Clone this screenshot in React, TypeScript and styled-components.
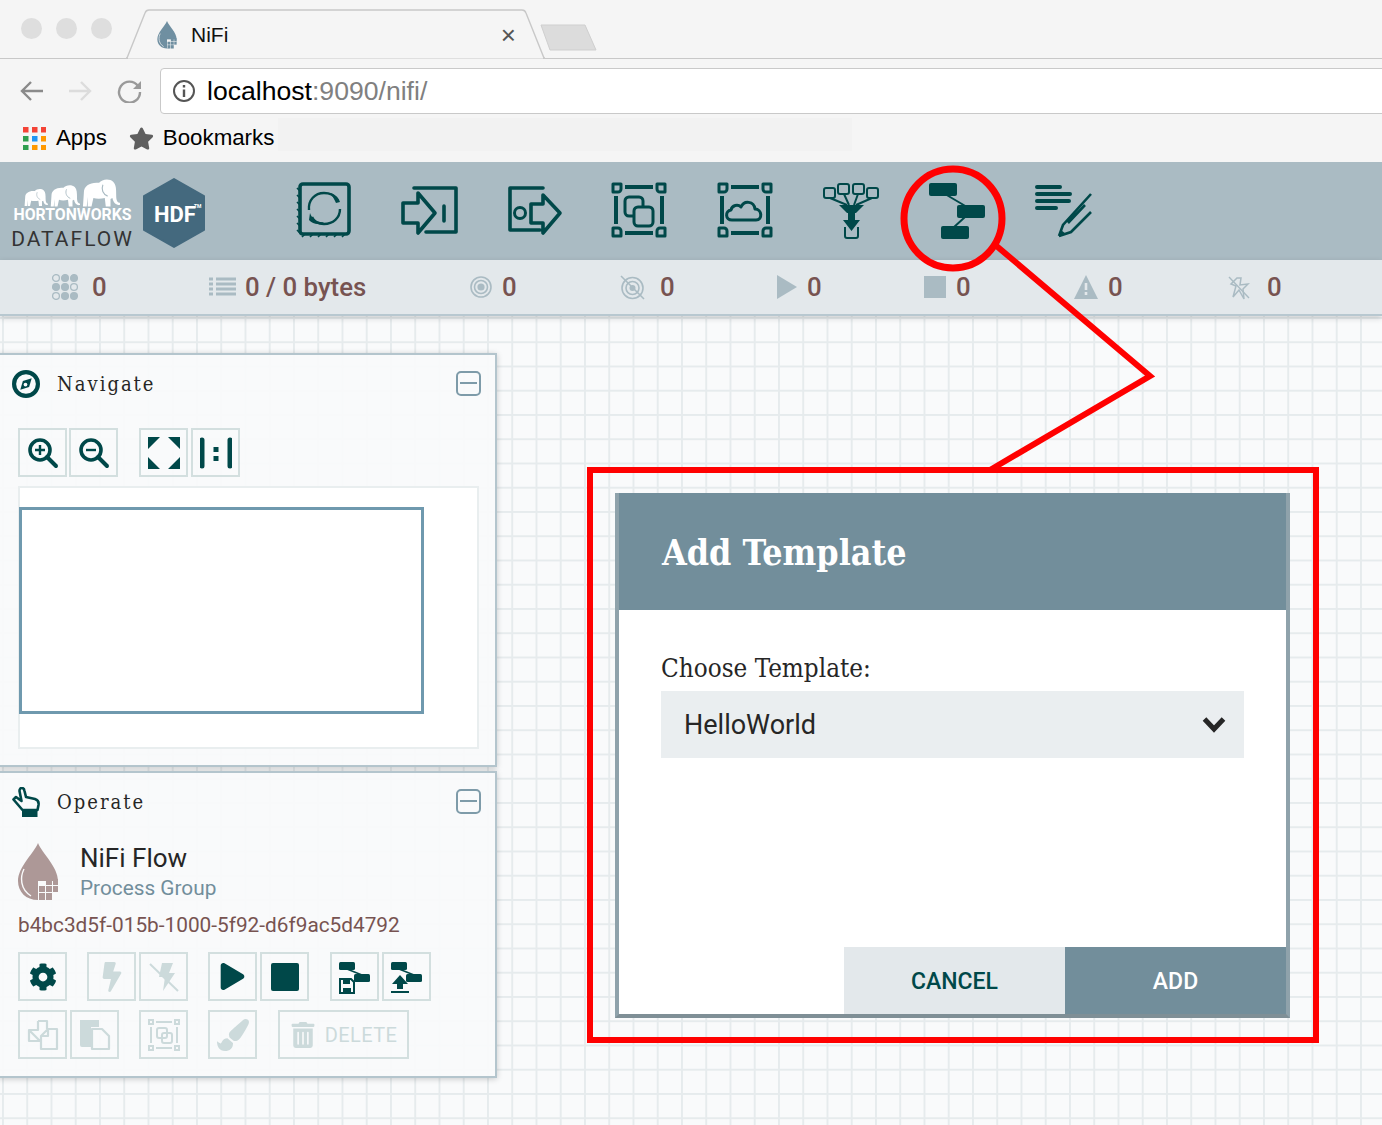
import React from 'react';
import styled, { createGlobalStyle } from 'styled-components';
import { FaCog, FaBolt, FaPlay, FaPaintBrush, FaStar, FaTrashAlt } from 'react-icons/fa';

const TEAL = '#004849';
const MUTE = '#aabbc3';
const OFF = '#ccdadb';

const Global = createGlobalStyle`
  html, body { margin: 0; padding: 0; background: #f9fafb; }
  * { box-sizing: border-box; }
`;

const Page = styled.div`
  position: relative; width: 1382px; height: 1125px; overflow: hidden;
  display: flex; flex-direction: column; font-family: Roboto, sans-serif;
`;

/* browser chrome */
const TabStrip = styled.div`
  position: relative; height: 59px; flex: none; background: #f5f5f5; border-bottom: 1px solid #c8c8c8;
  display: flex; padding: 18px 0 0 21px; gap: 14px;
`;
const Light = styled.span`width: 21px; height: 21px; border-radius: 50%; background: #dedede; flex: none;`;
const TabShape = styled.svg`position: absolute; left: 120px; top: 8px;`;
const TabBody = styled.div`
  position: absolute; left: 156px; top: 12px; width: 364px; height: 46px;
  display: flex; align-items: center; gap: 13px; font: 21px "Liberation Sans", sans-serif; color: #111;
`;
const TabClose = styled.span`margin-left: auto; margin-right: 4px; font-size: 26px; color: #555; line-height: 1; font-weight: 300;`;
const NavRow = styled.div`
  height: 59px; flex: none; background: #f5f5f5; display: flex; align-items: center; padding: 5px 0 0 19px; gap: 24px;
`;
const NavGlyph = styled.svg`flex: none;`;
const Address = styled.div`
  flex: 1; height: 46px; margin-left: -6px; margin-right: -8px; background: #fff; border: 1px solid #c9c9c9; border-radius: 4px;
  display: flex; align-items: center; padding-left: 11px; gap: 11px; font: 26.6px "Liberation Sans", sans-serif; color: #000;
`;
const Host = styled.span`color: #808080;`;
const BookmarkRow = styled.div`
  height: 44px; flex: none; background: #f5f5f5; display: flex; align-items: flex-start; padding: 8px 0 0 23px; font: 22.3px "Liberation Sans", sans-serif; color: #000;
`;
const BookItem = styled.div`display: flex; align-items: center; gap: ${p => p.$gap}px; height: 24px; margin-right: ${p => p.$mr}px;`;
const BookFill = styled.div`width: 574px; height: 33px; margin-top: -8px; background: #f2f2f2;`;

/* NiFi toolbar */
const Toolbar = styled.div`height: 98px; flex: none; background: #aabbc3; display: flex; align-items: center;`;
const Logo = styled.div`width: 270px; flex: none; height: 98px; display: flex; padding: 16px 0 0 12px; gap: 10px;`;
const LogoWords = styled.div`width: 121px; display: flex; flex-direction: column; align-items: center;`;
const Horton = styled.div`font: 700 15.8px/15px Roboto, sans-serif; color: #fff; margin-top: -1px; white-space: nowrap;`;
const Dataflow = styled.div`font: 400 21px/24px Roboto, sans-serif; color: #333; letter-spacing: 2px; margin-top: 5px; white-space: nowrap;`;
const Hex = styled.svg`flex: none;`;
const Tool = styled.div`width: 105.7px; flex: none; display: flex; justify-content: center; padding-bottom: 2px;`;

const Stats = styled.div`
  height: 56px; flex: none; background: #e3e8eb; border-bottom: 2px solid #b8c8d0; display: flex; align-items: center; padding: 0 0 0 52px;
  position: relative; z-index: 2; box-shadow: 0 2px 6px rgba(0,0,0,.18);
`;
const Stat = styled.div`width: ${p => p.$w}px; flex: none; display: flex; align-items: center; gap: ${p => p.$gap ?? 10}px; font: 500 25.8px/30px Roboto, sans-serif; color: #775351;`;

/* canvas */
const Canvas = styled.div`
  position: relative; flex: 1; background-color: #f9fafb;
  background-image: linear-gradient(to right, #e6ebed 2px, transparent 2px), linear-gradient(to bottom, #e6ebed 2px, transparent 2px);
  background-size: 24.25px 24.25px; background-position: 2px 1px;
`;
const Panel = styled.section`
  position: absolute; left: -2px; top: ${p => p.$top}px; width: 499px; height: ${p => p.$h}px;
  background: rgba(249,250,251,.93); border: 2px solid #b4c5cd; box-shadow: 0 1px 6px rgba(0,0,0,.2);
  padding: ${p => p.$pt}px 0 0 16px;
`;
const PanelHead = styled.header`display: flex; align-items: center; height: 28px; margin-left: -4px; padding-right: 14px;`;
const PanelIcon = styled.svg`flex: none;`;
const PanelTitle = styled.h2`
  margin: 0 0 0 17px; font: 400 20px/28px "DejaVu Serif Condensed", "DejaVu Serif", serif; letter-spacing: 2px; color: #262626;
`;
const Collapse = styled.span`
  margin-left: auto; margin-top: -2px; width: 25px; height: 25px; border: 2px solid #7e9ba9; border-radius: 5px; display: flex; align-items: center; justify-content: center;
  &::before { content: ''; width: 17px; height: 2px; background: #7e9ba9; }
`;
const BtnRow = styled.div`display: flex; margin: ${p => p.$mt ?? 0}px 0 0 2px;`;
const Btn = styled.button`
  width: ${p => p.$w ?? 49}px; height: 49px; margin: 0 0 0 ${p => p.$ml ?? 0}px; padding: 0; flex: none; background: transparent;
  border: 2px solid #d3dfdf; display: flex; align-items: center; justify-content: center; gap: 9px;
  color: ${p => (p.$off ? OFF : TEAL)}; font: 400 20px Roboto, sans-serif; letter-spacing: .4px;
`;
const Bird = styled.div`width: 461px; height: 263px; margin: 9px 0 0 2px; background: #fff; border: 2px solid #e9eeef; padding: 19px 0 0 0;`;
const BirdView = styled.div`width: 405px; height: 207px; margin-left: -1px; border: 3px solid #6f99ae;`;
const CompRow = styled.div`display: flex; align-items: flex-start; gap: 22px; margin: 27px 0 0 2px;`;
const CompName = styled.div`font: 400 26px/30px Roboto, sans-serif; color: #262626;`;
const CompType = styled.div`font: 400 20.8px/30px Roboto, sans-serif; color: #728e9b;`;
const Uuid = styled.div`font: 400 20.8px/26px Roboto, sans-serif; color: #775351; margin: 9px 0 14px 2px; white-space: nowrap;`;

/* dialog */
const Dialog = styled.div`
  position: absolute; left: 615px; top: 177px; width: 675px; height: 525px; background: #fff;
  border: 4px solid #8fa2ab; border-top: 0; border-bottom-color: #7f8f96; display: flex; flex-direction: column;
`;
const DialogHead = styled.header`
  height: 117px; flex: none; background: #728e9b; display: flex; align-items: center; padding: 2px 0 0 43px;
  color: #fff; font: 700 35.5px "DejaVu Serif Condensed", "DejaVu Serif", serif; box-shadow: -4px 0 0 #8fa2ab, 4px 0 0 #8fa2ab;
`;
const DialogBody = styled.div`flex: 1; padding: 42px 42px 0;`;
const FieldLabel = styled.label`display: block; font: 400 25.8px/32px "DejaVu Serif Condensed", "DejaVu Serif", serif; color: #262626;`;
const Combo = styled.div`
  height: 67px; margin-top: 7px; background: #eaeef0; display: flex; align-items: center; padding: 0 18px 0 23px;
  font: 400 27px Roboto, sans-serif; color: #262626; justify-content: space-between;
`;
const DialogFoot = styled.footer`display: flex; justify-content: flex-end; flex: none;`;
const Action = styled.button`
  width: 221px; height: 67px; border: 0; padding: 2px 0 0; background: ${p => (p.$primary ? '#728e9b' : '#e3e8eb')};
  color: ${p => (p.$primary ? '#fff' : TEAL)}; font: 500 23px Roboto, sans-serif;
`;

const Overlay = styled.svg`position: absolute; left: 0; top: 0; pointer-events: none; z-index: 5;`;

/* icon parts */
const Line = { fill: 'none', stroke: 'currentColor', strokeWidth: 3.6, strokeLinejoin: 'round', strokeLinecap: 'round' } as const;
const Svg = ({ s = 60, h, color = TEAL, children }: any) => (
  <svg width={s} height={h ?? s} viewBox={`0 0 ${s} ${h ?? s}`} style={{ color, flex: 'none', display: 'block' }}>{children}</svg>
);

const Corners = () => (
  <g {...Line} strokeLinecap="butt">
    <path d="M15 7H43M15 53H43M6 16V44M52 16V44" strokeWidth="4" />
    <path d="M3 4h8v5a3 3 0 0 1-3 3H3zM47 4h8v8h-5a3 3 0 0 1-3-3zM3 48h5a3 3 0 0 1 3 3v5H3zM50 48h5v8h-8v-5a3 3 0 0 1 3-3z" strokeWidth="3" />
  </g>
);

const Processor = () => (
  <Svg>
    <rect x="7" y="4" width="49" height="50" rx="3" {...Line} />
    <path d="M4 8l3 3M4 15l3 3M4 22l3 3M4 29l3 3M4 36l3 3M4 43l3 3M4 50l3 3M9 57l3-3M17 57l3-3M25 57l3-3M33 57l3-3M41 57l3-3M49 57l3-3" stroke={TEAL} strokeWidth="1.6" />
    <path d="M16 30C15 20 22 13 31 13C36 13 41 15 43 19" fill="none" stroke={TEAL} strokeWidth="2.4" />
    <path d="M47 29C47 38 40 44 31 44C26 44 21 42 19 37" fill="none" stroke={TEAL} strokeWidth="2.4" />
    <path d="M38 13C43 15 46 18 47 22L43 23C41 19 40 17 38 13ZM17 33C19 39 25 43 31 42C28 45 20 45 16 40Z" fill={TEAL} />
  </Svg>
);
const InputPort = () => (
  <Svg>
    <path d="M4 23H19V13L36 33L19 53V43H4Z M15 8H57V52H27M45 26V41" {...Line} />
  </Svg>
);
const OutputPort = () => (
  <Svg>
    <g transform="translate(-1 0)">
      <path d="M40 8H7V50H37M28 24H40V15L57 33L40 53V43H28Z" {...Line} />
      <circle cx="17" cy="33" r="5.5" {...Line} strokeWidth="3" />
    </g>
  </Svg>
);
const GroupIcon = () => (
  <Svg>
    <Corners />
    <rect x="15" y="17" width="18" height="19" rx="4" {...Line} strokeWidth="3" />
    <rect x="24" y="27" width="19" height="19" rx="4" fill="#aabbc3" stroke={TEAL} strokeWidth="3" />
  </Svg>
);
const RemoteIcon = () => (
  <Svg>
    <Corners />
    <path d="M16 40C9 40 9 31 15 30C16 25 22 24 25 27C28 20 38 21 39 29C46 29 47 40 40 40Z" {...Line} strokeWidth="3" />
  </Svg>
);
const Funnel = () => (
  <Svg>
    <g transform="translate(0 1)">
      <g fill="none" stroke={TEAL} strokeWidth="2">
        <rect x="3" y="7" width="11" height="10" rx="2" /><rect x="17" y="3" width="11" height="10" rx="2" /><rect x="32" y="3" width="11" height="10" rx="2" /><rect x="46" y="7" width="11" height="10" rx="2" />
        <path d="M9 17L26 24M23 13L28 24M37 13L33 24M51 17L35 24M24 46V55a2 2 0 0 0 2 2H35a2 2 0 0 0 2-2V46" />
      </g>
      <path d="M18 24H43L35 32H26Z" fill={TEAL} />
      <path d="M27 31H34V39H39L30.5 50L22 39H27Z" fill={TEAL} />
    </g>
  </Svg>
);
const Flow = () => (
  <Svg>
    <path d="M18 14L40 27M38 37L26 48" stroke={TEAL} strokeWidth="2" />
    <rect x="2" y="3" width="28" height="13" rx="2" fill={TEAL} />
    <rect x="30" y="25" width="28" height="13" rx="2" fill={TEAL} />
    <rect x="14" y="46" width="28" height="13" rx="2" fill={TEAL} />
  </Svg>
);
const Label = () => (
  <Svg>
    <path d="M4 7H27M4 14H37M4 21H36M4 28H23" stroke={TEAL} strokeWidth="4" strokeLinecap="round" />
    <path d="M26 56L30 45L58 14M26 56L38 52L58 32M35 43L52 25" fill="none" stroke={TEAL} strokeWidth="2.6" />
    <path d="M26 57L28 50L33 54Z" fill={TEAL} />
  </Svg>
);

const Drop = ({ w, h, color, inner = '#f9fafb' }: any) => (
  <svg width={w} height={h} viewBox="0 0 40 58" style={{ flex: 'none', display: 'block' }}>
    <path d="M20 0C24 10 40 24 40 38C40 50 31 57 20 57C8 57 0 49 0 38C0 24 16 10 20 0Z" fill={color} />
    <path d="M6 26C2 34 2 46 13 53" fill="none" stroke={inner} strokeWidth="1.4" />
    <path d="M20 38H40V57H20Z" fill={inner} />
    <g fill={color}>
      <rect x="28" y="36" width="6" height="6" /><rect x="35" y="36" width="5" height="6" />
      <rect x="21" y="43" width="6" height="6" /><rect x="28" y="43" width="6" height="6" /><rect x="35" y="43" width="5" height="6" />
      <rect x="21" y="50" width="6" height="7" /><rect x="28" y="50" width="6" height="7" />
    </g>
  </svg>
);

const Elephant = ({ w, x, y }: any) => (
  <svg x={x} y={y} width={w} height={w * 0.78} viewBox="0 0 40 31">
    <path d="M1 30L2 15C2 8 9 4 18 5C21 1 29 0 33 4C36 7 36 12 36 18C36 23 37 26 40 26V28C36 29 33 26 32 21L30 22V30H25L24 21C20 22 15 22 12 21L10 30H6L6 20L5 30Z" fill="#fff" />
    <path d="M22 7C20 12 22 17 27 19" fill="none" stroke="#aabbc3" strokeWidth="1.2" />
  </svg>
);

const MiniFlow = () => (
  <g>
    <path d="M9 9L24 15" stroke={TEAL} strokeWidth="1.5" />
    <rect x="1" y="2" width="16" height="8" rx="1.5" fill={TEAL} />
    <rect x="16" y="14" width="16" height="8" rx="1.5" fill={TEAL} />
  </g>
);

export default function App() {
  return (
    <Page>
      <Global />
      <TabStrip>
        <Light /><Light /><Light />
        <TabShape width="490" height="52" viewBox="0 0 490 52">
          <path d="M6 50H7L25 5Q26 2 29 2H402Q405 2 406 5L424 50H425" fill="#f5f5f5" stroke="#c8c8c8" strokeWidth="1.4" />
          <path d="M8 50.5H423V52H8Z" fill="#f5f5f5" />
          <path d="M421 17H465L476 42H430Z" fill="#dcdcdc" stroke="#cfcfcf" strokeLinejoin="round" />
        </TabShape>
        <TabBody>
          <Drop w={22} h={28} color="#6f8fa1" inner="#f5f5f5" />
          <span>NiFi</span>
          <TabClose>×</TabClose>
        </TabBody>
      </TabStrip>
      <NavRow>
        <NavGlyph width="25" height="24" viewBox="0 0 25 24"><path d="M24 12H3M12 3L3 12L12 21" fill="none" stroke="#8a8a8a" strokeWidth="2.4" /></NavGlyph>
        <NavGlyph width="25" height="24" viewBox="0 0 25 24"><path d="M1 12H22M13 3L22 12L13 21" fill="none" stroke="#dcdcdc" strokeWidth="2.4" /></NavGlyph>
        <NavGlyph width="25" height="24" viewBox="0 0 25 24"><path d="M21 7A10.5 10.5 0 1 0 23 13" fill="none" stroke="#9a9a9a" strokeWidth="2.4" /><path d="M24 2V10H16Z" fill="#9a9a9a" /></NavGlyph>
        <Address>
          <svg width="24" height="24" viewBox="0 0 24 24" style={{ flex: 'none' }}>
            <circle cx="12" cy="12" r="10" fill="none" stroke="#555" strokeWidth="2" />
            <path d="M12 10.5V18M12 6V8.5" stroke="#555" strokeWidth="2.4" />
          </svg>
          <span>localhost<Host>:9090/nifi/</Host></span>
        </Address>
      </NavRow>
      <BookmarkRow>
        <BookItem $gap={10} $mr={22}>
          <svg width="23" height="23" viewBox="0 0 23 23" style={{ flex: 'none' }}>
            {['#f44336', '#f44336', '#f44336', '#2e9e4f', '#2196f3', '#ff9800', '#2e9e4f', '#ff9800', '#ff9800'].map((c, i) => (
              <rect key={i} x={(i % 3) * 9} y={Math.floor(i / 3) * 9} width="5.5" height="5.5" fill={c} />
            ))}
          </svg>
          <span>Apps</span>
        </BookItem>
        <BookItem $gap={9} $mr={4}>
          <FaStar size={25} color="#5f5f5f" />
          <span>Bookmarks</span>
        </BookItem>
        <BookFill />
      </BookmarkRow>

      <Toolbar>
        <Logo>
          <LogoWords>
            <svg width="121" height="30" viewBox="0 0 121 30" style={{ display: 'block' }}>
              <Elephant w={24} x={12} y={10} />
              <Elephant w={30} x={38} y={6} />
              <Elephant w={38} x={70} y={0} />
            </svg>
            <Horton>HORTONWORKS</Horton>
            <Dataflow>DATAFLOW</Dataflow>
          </LogoWords>
          <Hex width="62" height="70" viewBox="0 0 62 70">
            <path d="M31 1L61 18V52L31 69L1 52V18Z" fill="#44697e" stroke="#44697e" strokeLinejoin="round" strokeWidth="2" />
            <text x="11" y="44" fill="#fff" fontFamily="Roboto, sans-serif" fontWeight="700" fontSize="22">HDF</text>
            <text x="51" y="30" fill="#fff" fontFamily="Roboto, sans-serif" fontWeight="700" fontSize="5">TM</text>
          </Hex>
        </Logo>
        <Tool><Processor /></Tool>
        <Tool><InputPort /></Tool>
        <Tool><OutputPort /></Tool>
        <Tool><GroupIcon /></Tool>
        <Tool><RemoteIcon /></Tool>
        <Tool><Funnel /></Tool>
        <Tool><Flow /></Tool>
        <Tool><Label /></Tool>
      </Toolbar>

      <Stats>
        <Stat $w={157} $gap={14}>
          <Svg s={26} color={MUTE}>
            {[0, 1, 2, 3, 4, 5, 6, 7, 8].map(i => {
              const filled = [1, 2, 3, 4, 7, 8].includes(i);
              return <circle key={i} cx={4 + (i % 3) * 9} cy={4 + Math.floor(i / 3) * 9} r="3.4" fill={filled ? MUTE : 'none'} stroke={MUTE} strokeWidth="1.3" />;
            })}
          </Svg>
          0
        </Stat>
        <Stat $w={261} $gap={9}>
          <Svg s={27} h={20} color={MUTE}>
            <path d="M0 2H4M7 2H27M0 7H4M7 7H27M0 12H4M7 12H27M0 17H4M7 17H27" stroke={MUTE} strokeWidth="3" />
          </Svg>
          0 / 0 bytes
        </Stat>
        <Stat $w={150} $gap={10}>
          <Svg s={22} color={MUTE}>
            <circle cx="11" cy="11" r="10" fill="none" stroke={MUTE} strokeWidth="1.6" /><circle cx="11" cy="11" r="6.5" fill="none" stroke={MUTE} strokeWidth="1.6" /><circle cx="11" cy="11" r="3.6" fill={MUTE} />
          </Svg>
          0
        </Stat>
        <Stat $w={157} $gap={15}>
          <Svg s={25} color={MUTE}>
            <circle cx="12.5" cy="13" r="10.5" fill="none" stroke={MUTE} strokeWidth="1.6" /><circle cx="12.5" cy="13" r="6.5" fill="none" stroke={MUTE} strokeWidth="1.6" /><circle cx="12.5" cy="13" r="3" fill={MUTE} /><path d="M1 1L24 24" stroke={MUTE} strokeWidth="1.6" />
          </Svg>
          0
        </Stat>
        <Stat $w={147} $gap={10}>
          <Svg s={20} h={24} color={MUTE}><path d="M0 0L20 12L0 24Z" fill={MUTE} /></Svg>
          0
        </Stat>
        <Stat $w={150} $gap={10}>
          <Svg s={22} color={MUTE}><rect width="22" height="22" fill={MUTE} /></Svg>
          0
        </Stat>
        <Stat $w={154} $gap={10}>
          <Svg s={24} h={24} color={MUTE}><path d="M12 0L24 24H0Z" fill={MUTE} /><path d="M12 8V15M12 17V20" stroke="#e3e8eb" strokeWidth="2.6" /></Svg>
          0
        </Stat>
        <Stat $w={120} $gap={17}>
          <Svg s={22} h={25} color={MUTE}>
            <path d="M9 3L13 3L12 10L20 9L15 14L16 24L11 15L5 22L8 11L3 9Z" fill="none" stroke={MUTE} strokeWidth="1.5" /><path d="M1 2L21 23" stroke={MUTE} strokeWidth="1.4" />
          </Svg>
          0
        </Stat>
      </Stats>

      <Canvas>
        <Panel $top={37} $h={414} $pt={15}>
          <PanelHead>
            <PanelIcon width="28" height="28" viewBox="0 0 27 27">
              <circle cx="13.5" cy="13.5" r="11.5" fill="none" stroke={TEAL} strokeWidth="4" />
              <path d="M19 8L16.5 16.5L8 19L10.5 10.5Z" fill={TEAL} /><circle cx="13" cy="14" r="1.8" fill="#f9fafb" />
            </PanelIcon>
            <PanelTitle>Navigate</PanelTitle>
            <Collapse />
          </PanelHead>
          <BtnRow $mt={30}>
            <Btn aria-label="zoom in">
              <Svg s={32}><circle cx="13" cy="13" r="10" fill="none" stroke={TEAL} strokeWidth="3.6" /><path d="M20 20L29 29" stroke={TEAL} strokeWidth="4" strokeLinecap="round" /><path d="M13 8V18M8 13H18" stroke={TEAL} strokeWidth="2.4" /></Svg>
            </Btn>
            <Btn aria-label="zoom out" $ml={2}>
              <Svg s={32}><circle cx="13" cy="13" r="10" fill="none" stroke={TEAL} strokeWidth="3.6" /><path d="M20 20L29 29" stroke={TEAL} strokeWidth="4" strokeLinecap="round" /><path d="M8 13H18" stroke={TEAL} strokeWidth="2.4" /></Svg>
            </Btn>
            <Btn aria-label="fit" $ml={21}>
              <Svg s={32}><path d="M0 0H12L0 12ZM32 0V12L20 0ZM0 32V20L12 32ZM32 32H20L32 20Z" fill={TEAL} /></Svg>
            </Btn>
            <Btn aria-label="actual" $ml={3}>
              <Svg s={32}><path d="M2 3V29M30 3V29" stroke={TEAL} strokeWidth="5" strokeLinecap="round" /><path d="M16 10V15M16 19V24" stroke={TEAL} strokeWidth="5" /></Svg>
            </Btn>
          </BtnRow>
          <Bird><BirdView /></Bird>
        </Panel>

        <Panel $top={455} $h={307} $pt={15}>
          <PanelHead>
            <PanelIcon width="28" height="31" viewBox="0 0 28 31">
              <path d="M1.5 12.5L4 10L9.5 14L7.5 4C7.5 0 12 0 12.5 4L14 10L23 12C26 13 27 15 26.5 18L25.5 23H10.5Z" fill="none" stroke={TEAL} strokeWidth="2.6" strokeLinejoin="round" />
              <path d="M10 23H25.5V30H10Z" fill={TEAL} />
            </PanelIcon>
            <PanelTitle>Operate</PanelTitle>
            <Collapse />
          </PanelHead>
          <CompRow>
            <Drop w={40} h={58} color="#ad9897" />
            <div>
              <CompName>NiFi Flow</CompName>
              <CompType>Process Group</CompType>
            </div>
          </CompRow>
          <Uuid>b4bc3d5f-015b-1000-5f92-d6f9ac5d4792</Uuid>
          <BtnRow>
            <Btn aria-label="configure"><FaCog size={28} /></Btn>
            <Btn aria-label="enable" $off $ml={20}><FaBolt size={30} /></Btn>
            <Btn aria-label="disable" $off $ml={3}>
              <Svg s={30} color={OFF}><path d="M13 1H24L20 11H26L14 29L16 15H10Z" fill={OFF} /><path d="M1 2L29 29" stroke={OFF} strokeWidth="2" /></Svg>
            </Btn>
            <Btn aria-label="start" $ml={20}><FaPlay size={27} /></Btn>
            <Btn aria-label="stop" $ml={3}><Svg s={28}><rect width="28" height="28" rx="2" fill={TEAL} /></Svg></Btn>
            <Btn aria-label="save" $ml={21}>
              <Svg s={34}>
                <MiniFlow />
                <path d="M2 19H13L16 22V33H2Z" fill="none" stroke={TEAL} strokeWidth="2" />
                <path d="M5 20H12V24H5ZM5 28H13V32H5Z" fill={TEAL} />
              </Svg>
            </Btn>
            <Btn aria-label="upload" $ml={3}>
              <Svg s={34}>
                <MiniFlow />
                <path d="M10 15L18 24H13V29H7V24H2Z" fill={TEAL} />
                <path d="M1 32H19" stroke={TEAL} strokeWidth="2" />
              </Svg>
            </Btn>
          </BtnRow>
          <BtnRow $mt={9}>
            <Btn aria-label="copy" $off>
              <Svg s={32} color={OFF}><path d="M11 2H20V10M13 22H2V11ZM11 2V11H2M21 10H30V30H14V17ZM21 10V17H14" fill="none" stroke={OFF} strokeWidth="2.2" strokeLinejoin="round" /></Svg>
            </Btn>
            <Btn aria-label="paste" $off $ml={3}>
              <Svg s={32} color={OFF}><path d="M1 1H20V8H12V28H3a2 2 0 0 1-2-2Z" fill={OFF} /><path d="M13 10H23L30 17V30H13Z" fill="none" stroke={OFF} strokeWidth="2.2" strokeLinejoin="round" /></Svg>
            </Btn>
            <Btn aria-label="group" $off $ml={20}>
              <Svg s={32} color={OFF}><g fill="none" stroke={OFF} strokeWidth="2"><path d="M8 3H24M8 29H24M3 8V24M29 8V24" /><rect x="1" y="1" width="4" height="4" /><rect x="27" y="1" width="4" height="4" /><rect x="1" y="27" width="4" height="4" /><rect x="27" y="27" width="4" height="4" /><rect x="9" y="9" width="10" height="10" rx="2" /><rect x="14" y="14" width="10" height="10" rx="2" /></g></Svg>
            </Btn>
            <Btn aria-label="color" $off $ml={20}><FaPaintBrush size={32} /></Btn>
            <Btn $off $ml={21} $w={131}><FaTrashAlt size={26} />DELETE</Btn>
          </BtnRow>
        </Panel>

        <Dialog>
          <DialogHead>Add Template</DialogHead>
          <DialogBody>
            <FieldLabel>Choose Template:</FieldLabel>
            <Combo>
              HelloWorld
              <svg width="24" height="17" viewBox="0 0 24 17"><path d="M2.5 3L12 13L21.5 3" fill="none" stroke="#262626" strokeWidth="5" /></svg>
            </Combo>
          </DialogBody>
          <DialogFoot>
            <Action>CANCEL</Action>
            <Action $primary>ADD</Action>
          </DialogFoot>
        </Dialog>
      </Canvas>

      <Overlay width="1382" height="1125" viewBox="0 0 1382 1125">
        <ellipse cx="953" cy="218.5" rx="49" ry="49.5" fill="none" stroke="#ff0000" strokeWidth="7" />
        <path d="M993 243L1150 376L990 470" fill="none" stroke="#ff0000" strokeWidth="6" />
        <rect x="590" y="470" width="726" height="570" fill="none" stroke="#ff0000" strokeWidth="6" />
      </Overlay>
    </Page>
  );
}
